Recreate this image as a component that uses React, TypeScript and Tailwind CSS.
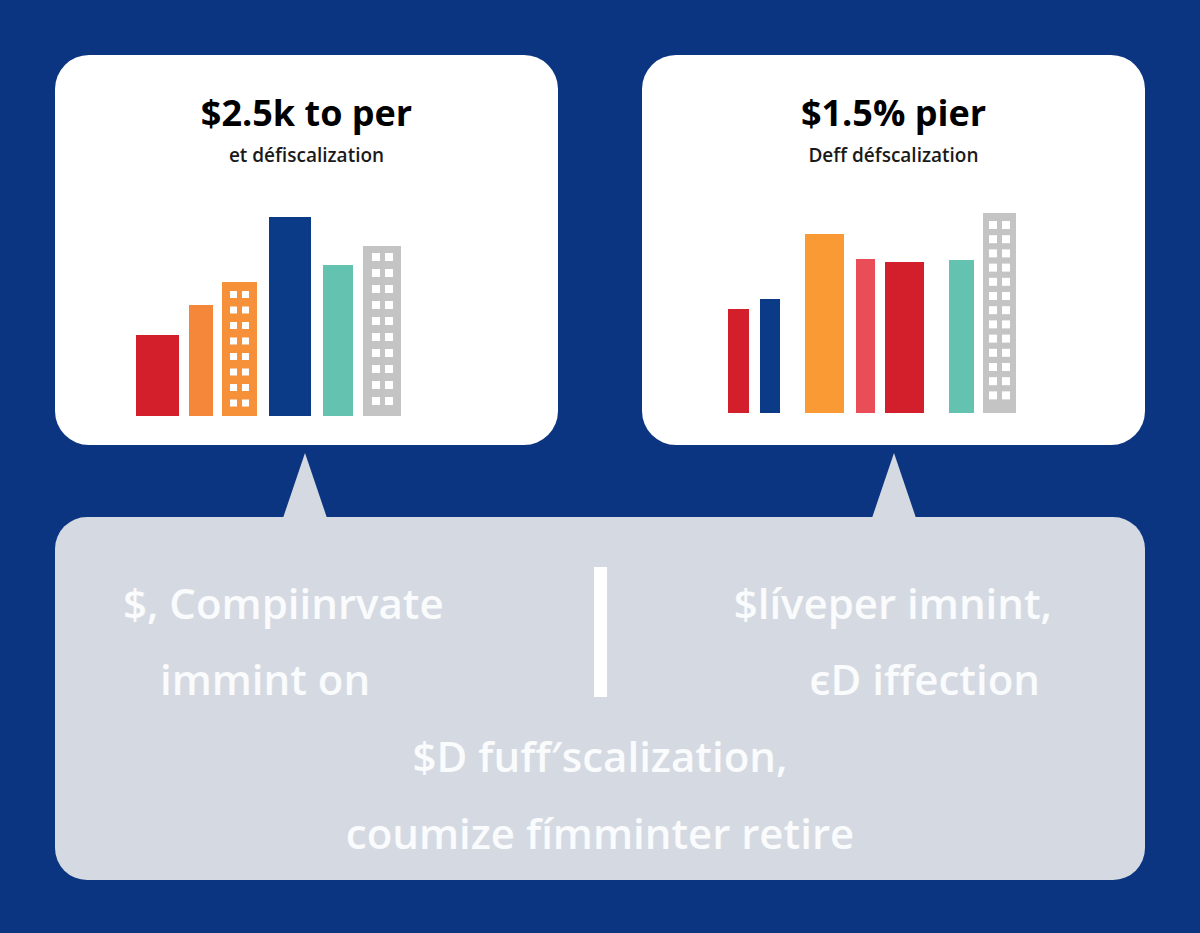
const BG = "#0c3581"

type Bar = { x: number; w: number; top: number; color: string; windows?: { cols: number[]; ww: number; wh: number; start: number; pitch: number; rows: number } }

const leftBars: Bar[] = [
  { x: 81, w: 43, top: 119, color: "#d31f2c" },
  { x: 134, w: 24, top: 89, color: "#f5873a" },
  { x: 167, w: 35, top: 66, color: "#f6913a", windows: { cols: [8, 20], ww: 7, wh: 7, start: 9, pitch: 15.5, rows: 8 } },
  { x: 214, w: 42, top: 1, color: "#0b3a86" },
  { x: 268, w: 30, top: 49, color: "#63c3b0" },
  { x: 308, w: 38, top: 30, color: "#c4c4c4", windows: { cols: [9, 22], ww: 8, wh: 8, start: 7, pitch: 16, rows: 10 } },
]

const rightBars: Bar[] = [
  { x: 86, w: 21, top: 98, color: "#d31f2c" },
  { x: 118, w: 20, top: 88, color: "#0b3a86" },
  { x: 163, w: 39, top: 23, color: "#f99a34" },
  { x: 214, w: 19, top: 48, color: "#e84d58" },
  { x: 243, w: 39, top: 51, color: "#d31f2c" },
  { x: 307, w: 25, top: 49, color: "#63c3b0" },
  { x: 341, w: 33, top: 2, color: "#c4c4c4", windows: { cols: [6, 19], ww: 8, wh: 8, start: 8, pitch: 14.2, rows: 13 } },
]

function Chart({ bars, height }: { bars: Bar[]; height: number }) {
  return (
    <svg width="503" height={height} viewBox={`0 0 503 ${height}`} className="block">
      {bars.map((b, i) => (
        <g key={i}>
          <rect x={b.x} y={b.top} width={b.w} height={height - b.top} fill={b.color} />
          {b.windows &&
            Array.from({ length: b.windows.rows }).map((_, r) =>
              b.windows!.cols.map((c) => (
                <rect
                  key={`${r}-${c}`}
                  x={b.x + c}
                  y={b.top + b.windows!.start + r * b.windows!.pitch}
                  width={b.windows!.ww}
                  height={b.windows!.wh}
                  fill="#ffffff"
                />
              )),
            )}
        </g>
      ))}
    </svg>
  )
}

function StatCard({ title, subtitle, bars, chartHeight, bottom }: { title: string; subtitle: string; bars: Bar[]; chartHeight: number; bottom: string }) {
  return (
    <div className="flex h-[390px] w-[503px] flex-col items-center rounded-[34px] bg-white">
      <div className="mt-[38px] text-[36px] font-bold leading-[40px] text-black">{title}</div>
      <div className="mt-[10px] text-[19px] font-semibold leading-[24px] text-[#1a1a1a]">{subtitle}</div>
      <div className={`mt-auto self-stretch ${bottom}`}>
        <Chart bars={bars} height={chartHeight} />
      </div>
    </div>
  )
}

export default function App() {
  return (
    <div
      className="flex h-[933px] w-[1200px] flex-col px-[55px] pt-[55px]"
      style={{ backgroundColor: BG, fontFamily: '"Open Sans", "Noto Sans", sans-serif' }}
    >
      <div className="flex justify-between">
        <StatCard title="$2.5k to per" subtitle="et défiscalization" bars={leftBars} chartHeight={200} bottom="mb-[29px]" />
        <StatCard title="$1.5% pier" subtitle="Deff défscalization" bars={rightBars} chartHeight={202} bottom="mb-[32px]" />
      </div>

      <div className="relative mt-[72px] h-[363px] rounded-[32px] bg-[#d5dae2] text-[#fafbfc]">
        {/* speech pointers */}
        <svg className="absolute left-[228px] top-[-64px]" width="44" height="65" viewBox="0 0 44 65">
          <polygon points="22,0 0,65 44,65" fill="#d5dae2" />
        </svg>
        <svg className="absolute left-[817px] top-[-64px]" width="44" height="65" viewBox="0 0 44 65">
          <polygon points="22,0 0,65 44,65" fill="#d5dae2" />
        </svg>

        <div className="grid grid-cols-[1fr_13px_1fr] pt-[48px] text-[42px] font-semibold leading-[76px]">
          <div>
            <div className="ml-[68px]">$, Compiinrvate</div>
            <div className="ml-[105px]">immint on</div>
          </div>
          <div className="mt-[2px] h-[130px] w-[13px] bg-white" />
          <div className="text-right">
            <div className="mr-[93px]">$líveper imnint,</div>
            <div className="mr-[105px]">єD iffection</div>
          </div>
        </div>
        <div className="text-center text-[42px] font-semibold leading-[77px]">
          <div>$D fuff′scalization,</div>
          <div>coumize fímminter retire</div>
        </div>
      </div>
    </div>
  )
}
